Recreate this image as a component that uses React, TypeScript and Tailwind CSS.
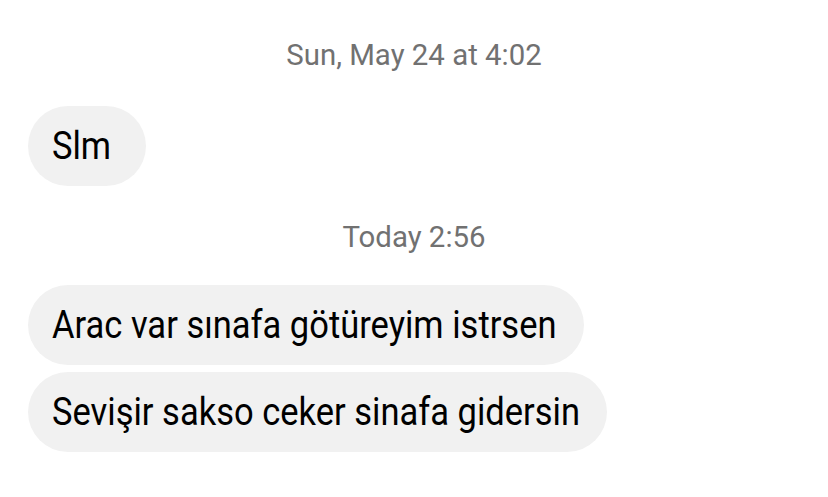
import React from 'react'

const font = { fontFamily: 'Roboto, "Liberation Sans", sans-serif' }

const Stamp = ({ children }: { children: React.ReactNode }) => (
  <div className="flex justify-center text-[29.4px] leading-none text-[#717171]">
    <span className="inline-block scale-y-[1.03]">{children}</span>
  </div>
)

const Bubble = ({ text, minW = '' }: { text: string; minW?: string }) => (
  <div className="flex">
    <div
      className={`flex h-[80px] items-center rounded-full bg-[#f1f1f1] pl-6 pr-[27px] text-[34.5px] leading-none text-black ${minW}`}
    >
      <span className="inline-block scale-y-[1.11]">{text}</span>
    </div>
  </div>
)

export default function App() {
  return (
    <div className="h-[497px] w-[828px] bg-white pl-[28px] pt-[41px]" style={font}>
      <div className="-ml-[28px]">
        <Stamp>Sun, May 24 at 4:02</Stamp>
      </div>
      <div className="mt-[36px]">
        <Bubble text="Slm" minW="min-w-[118px]" />
      </div>
      <div className="-ml-[28px] mt-[37px]">
        <Stamp>Today 2:56</Stamp>
      </div>
      <div className="mt-[32px] flex flex-col gap-[7px]">
        <Bubble text="Arac var sınafa götüreyim istrsen" />
        <Bubble text="Sevişir sakso ceker sinafa gidersin" />
      </div>
    </div>
  )
}
